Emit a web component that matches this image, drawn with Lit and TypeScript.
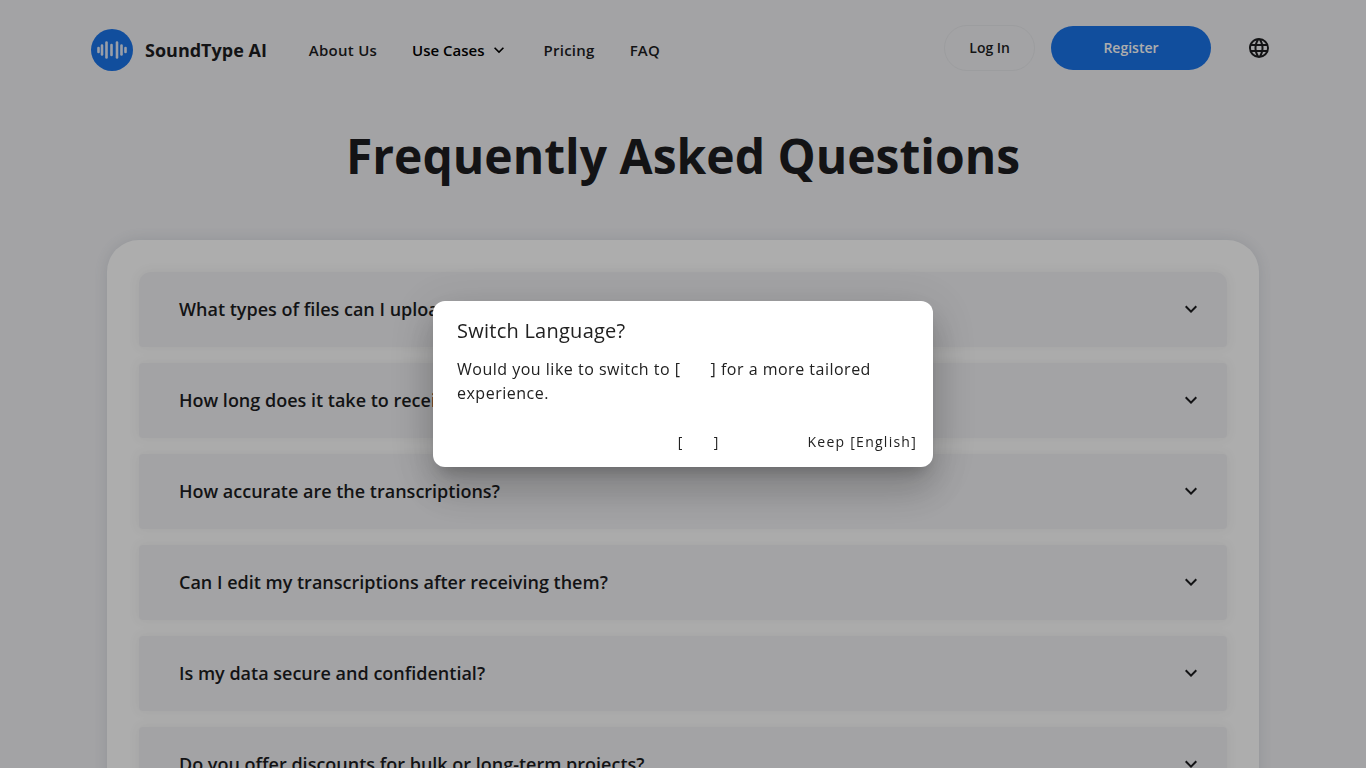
import { LitElement, html, css, svg } from "lit";
import { customElement, state } from "lit/decorators.js";

const chevron = svg`<path d="M7.41 8.59 12 13.17l4.59-4.58L18 10l-6 6-6-6z" fill="currentColor" />`;

const globe = svg`<path fill="currentColor" d="M16.36 14c.08-.66.14-1.32.14-2s-.06-1.34-.14-2h3.38c.16.64.26 1.31.26 2s-.1 1.36-.26 2m-5.15 5.56c.6-1.11 1.06-2.31 1.38-3.56h2.95a8.03 8.03 0 0 1-4.33 3.56M14.34 14H9.66c-.1-.66-.16-1.32-.16-2s.06-1.35.16-2h4.68c.09.65.16 1.32.16 2s-.07 1.34-.16 2M12 19.96c-.83-1.2-1.5-2.53-1.91-3.96h3.82c-.41 1.43-1.08 2.76-1.91 3.96M8 8H5.08A7.92 7.92 0 0 1 9.4 4.44C8.8 5.55 8.35 6.75 8 8m-2.92 8H8c.35 1.25.8 2.45 1.4 3.56A8 8 0 0 1 5.08 16m-.82-2C4.1 13.36 4 12.69 4 12s.1-1.36.26-2h3.38c-.08.66-.14 1.32-.14 2s.06 1.34.14 2M12 4.03c.83 1.2 1.5 2.54 1.91 3.97h-3.82c.41-1.43 1.08-2.77 1.91-3.97M18.92 8h-2.95a15.7 15.7 0 0 0-1.38-3.56c1.84.63 3.37 1.9 4.33 3.56M12 2C6.47 2 2 6.5 2 12a10 10 0 0 0 10 10 10 10 0 0 0 10-10A10 10 0 0 0 12 2" />`;

const logoBars = [
  [7.5, 2],
  [11, 4.5],
  [15.5, 7.5],
  [20.5, 5],
  [26, 7.5],
  [30.5, 4.5],
  [34.5, 2],
];

@customElement("app-root")
export class AppRoot extends LitElement {
  @state() private dialogOpen = true;

  private questions = [
    "What types of files can I upload for transcription?",
    "How long does it take to receive my transcriptions?",
    "How accurate are the transcriptions?",
    "Can I edit my transcriptions after receiving them?",
    "Is my data secure and confidential?",
    "Do you offer discounts for bulk or long-term projects?",
  ];

  static styles = css`
    :host {
      display: block;
      height: 100vh;
      overflow: hidden;
      background: #f1f1f4;
      color: #1c1d1f;
      font-family: "Open Sans", "Noto Sans", sans-serif;
    }
    * {
      box-sizing: border-box;
    }
    button {
      font: inherit;
      color: inherit;
      background: none;
      border: 0;
      padding: 0;
      cursor: pointer;
    }
    a {
      color: inherit;
      text-decoration: none;
    }
    svg {
      display: block;
      flex: none;
    }
    .header {
      display: flex;
      align-items: center;
      height: 96px;
      padding: 0 95px 0 91px;
      font-size: 15px;
      line-height: 24px;
      font-weight: 600;
      letter-spacing: 0.25px;
    }
    .brand {
      display: flex;
      align-items: center;
      gap: 12px;
      margin-top: 4px;
      font-size: 18px;
      font-weight: 700;
      letter-spacing: 0;
    }
    .nav {
      display: flex;
      align-items: center;
      gap: 35px;
      margin: 4px 0 0 42px;
    }
    .menu {
      display: flex;
      align-items: center;
      gap: 4px;
      color: #000;
      letter-spacing: 0;
    }
    .actions {
      display: flex;
      align-items: center;
      gap: 16px;
      margin-left: auto;
    }
    .pill {
      height: 44px;
      border-radius: 22px;
      font-size: 14px;
      padding: 0 24px;
    }
    .login {
      height: 46px;
      border: 1px solid #e6e7ea;
      border-radius: 23px;
    }
    .register {
      width: 160px;
      background: #1a73e8;
      color: #fff;
    }
    .language {
      margin-left: 20px;
    }
    .title {
      margin: 24px 0 0;
      text-align: center;
      font-size: 48px;
      line-height: 72px;
      font-weight: 700;
    }
    .card {
      display: flex;
      flex-direction: column;
      gap: 16px;
      max-width: 1152px;
      margin: 48px auto 0;
      padding: 32px;
      background: #fff;
      border-radius: 32px;
      box-shadow: 0 0 16px rgba(60, 80, 100, 0.14);
    }
    .question {
      display: flex;
      align-items: center;
      justify-content: space-between;
      height: 75px;
      padding: 0 24px 2px 40px;
      background: #f1f1f4;
      border-radius: 4px;
      box-shadow: 0 0 12px rgba(60, 60, 80, 0.08);
      font-size: 18px;
      line-height: 28px;
      font-weight: 600;
      text-align: left;
    }
    .question:first-child {
      border-radius: 12px 12px 4px 4px;
    }
    .overlay {
      position: fixed;
      inset: 0;
      display: flex;
      align-items: center;
      justify-content: center;
      background: rgba(0, 0, 0, 0.32);
    }
    .dialog {
      position: static;
      margin: 0;
      width: 500px;
      padding: 16px 8px 10px;
      border: 0;
      border-radius: 12px;
      background: #fff;
      color: #212121;
      box-shadow: 0 11px 15px -7px rgba(0, 0, 0, 0.2),
        0 24px 38px 3px rgba(0, 0, 0, 0.14), 0 9px 46px 8px rgba(0, 0, 0, 0.12);
    }
    .heading {
      margin: 0 16px;
      font-size: 20px;
      line-height: 28px;
      font-weight: 400;
      letter-spacing: 0.25px;
    }
    .message {
      margin: 12px 16px 20px;
      font-size: 16px;
      line-height: 24px;
      letter-spacing: 0.5px;
    }
    .blank {
      display: inline-block;
      width: 30px;
    }
    .choices {
      display: flex;
      justify-content: flex-end;
      gap: 88px;
      padding: 0 8px;
    }
    .choice {
      height: 32px;
      font-size: 14px;
      letter-spacing: 1.25px;
    }
  `;

  private close() {
    this.dialogOpen = false;
  }

  private icon(shape: unknown, size: number) {
    return html`<svg width=${size} height=${size} viewBox="0 0 24 24" aria-hidden="true">${shape}</svg>`;
  }

  render() {
    return html`
      <header class="header">
        <a class="brand" href="#">
          <svg width="42" height="42" viewBox="0 0 42 42" aria-hidden="true">
            <circle cx="21" cy="21" r="21" fill="#1a73e8" />
            ${logoBars.map(
              ([x, r]) =>
                svg`<path d="M${x} ${21 - r}V${21 + r}" stroke="#e0e9f8" stroke-width="2.6" stroke-linecap="round" />`
            )}
          </svg>
          <span>SoundType AI</span>
        </a>
        <nav class="nav">
          <a href="#about">About Us</a>
          <button class="menu">Use Cases ${this.icon(chevron, 20)}</button>
          <a href="#pricing">Pricing</a>
          <a href="#faq">FAQ</a>
        </nav>
        <div class="actions">
          <button class="pill login">Log In</button>
          <button class="pill register">Register</button>
          <button class="language" aria-label="Language">${this.icon(globe, 24)}</button>
        </div>
      </header>
      <main>
        <h1 class="title">Frequently Asked Questions</h1>
        <section class="card">
          ${this.questions.map(
            (q) => html`<button class="question" aria-expanded="false">
              <span>${q}</span>${this.icon(chevron, 24)}
            </button>`
          )}
        </section>
      </main>
      ${this.dialogOpen
        ? html`<div class="overlay">
            <dialog class="dialog" open aria-labelledby="switch">
              <h2 class="heading" id="switch">Switch Language?</h2>
              <p class="message">
                Would you like to switch to [<span class="blank"></span>] for a more tailored experience.
              </p>
              <div class="choices">
                <button class="choice" @click=${this.close}>[<span class="blank"></span>]</button>
                <button class="choice" @click=${this.close}>Keep [English]</button>
              </div>
            </dialog>
          </div>`
        : null}
    `;
  }
}
